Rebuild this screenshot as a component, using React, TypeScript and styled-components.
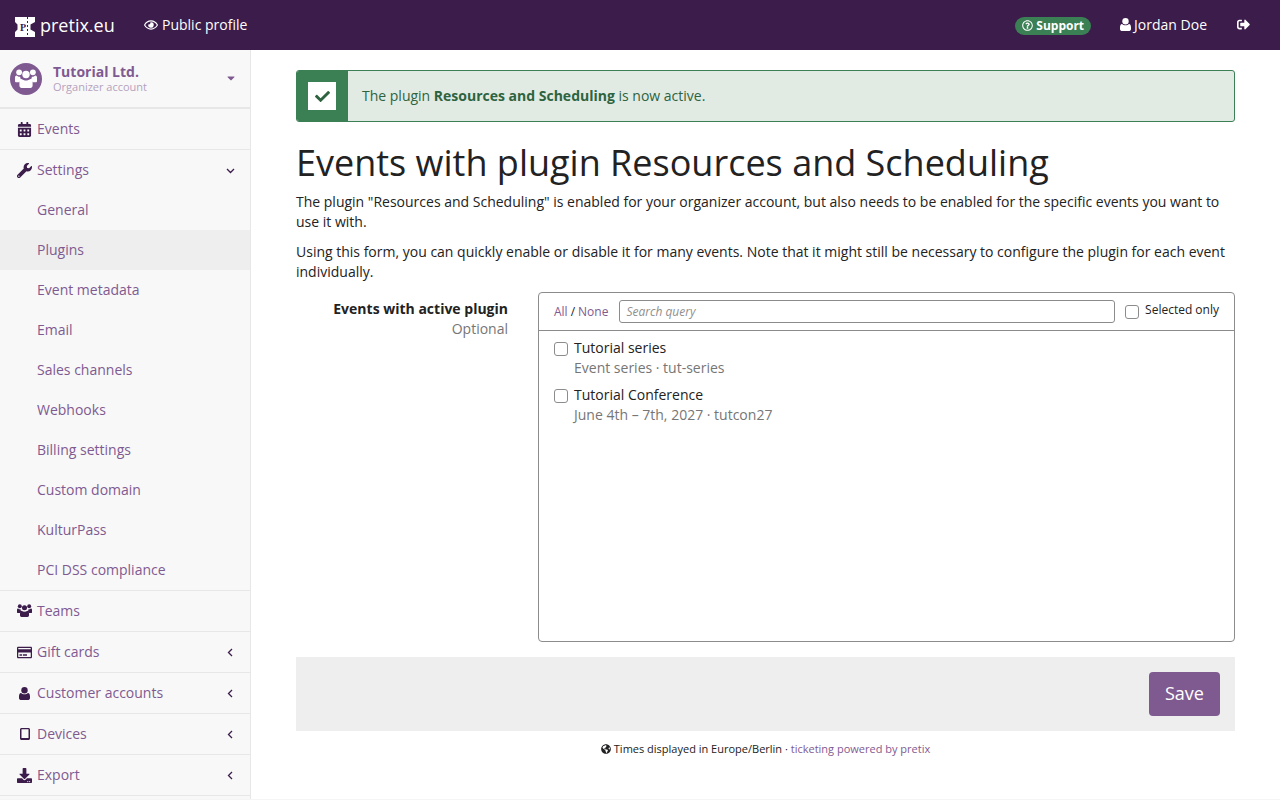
import styled, { createGlobalStyle } from 'styled-components'
import type { ReactNode } from 'react'
import {
  FaCalendarAlt,
  FaCaretDown,
  FaCheck,
  FaDownload,
  FaGlobeAmericas,
  FaRegCreditCard,
  FaRegEye,
  FaRegQuestionCircle,
  FaSignOutAlt,
  FaWrench,
} from 'react-icons/fa'

const purple = '#7f5a91'
const dark = '#3b1c4a'
const green = '#3b7f54'

const GlobalStyle = createGlobalStyle`
  html, body {
    margin: 0;
    height: 100%;
    overflow: hidden;
    background: #fff;
  }
  body {
    font-family: "Open Sans", "Liberation Sans", sans-serif;
    font-size: 14px;
    line-height: 20px;
    color: #222;
  }
  * {
    box-sizing: border-box;
  }
`

const Page = styled.div`
  width: 1280px;
  height: 800px;
  display: flex;
  flex-direction: column;
  overflow: hidden;
  border-bottom: 1px solid #f5f5f5;
`

const TopBar = styled.header`
  flex: 0 0 50px;
  display: flex;
  align-items: center;
  background: ${dark};
  color: #fff;
  padding-left: 15px;
`

const Brand = styled.a`
  display: flex;
  align-items: center;
  gap: 5px;
  font-size: 18px;
  color: #fff;
  width: 129px;
  svg {
    margin-top: 4px;
  }
`

const TopLink = styled.a`
  display: flex;
  align-items: center;
  gap: 4px;
  color: #fff;
  margin-top: -1px;
  svg {
    font-size: 14px;
  }
`

const TopRight = styled.div`
  margin-left: auto;
  display: flex;
  align-items: center;
`

const SupportPill = styled.span`
  display: flex;
  align-items: center;
  gap: 3px;
  height: 18px;
  padding: 0 7px;
  margin-right: 29px;
  border-radius: 9px;
  background: ${green};
  font-size: 12px;
  font-weight: 700;
  margin-top: 1px;
  svg {
    font-size: 11px;
  }
`

const UserLink = styled(TopLink)`
  gap: 3px;
  margin-right: 30px;
`

const LogoutLink = styled(TopLink)`
  margin-right: 30px;
  svg {
    font-size: 13px;
  }
`

const Body = styled.div`
  flex: 1;
  display: flex;
  min-height: 0;
`

const Sidebar = styled.nav`
  flex: 0 0 251px;
  background: #f8f8f8;
  border-right: 1px solid #e7e7e7;
`

const OrgHeader = styled.div`
  height: 59px;
  display: flex;
  align-items: center;
  padding: 0 15px 0 10px;
  border-bottom: 2px solid #e7e7e7;
`

const OrgAvatar = styled.span`
  width: 32px;
  height: 32px;
  border-radius: 50%;
  background: ${purple};
  color: #fff;
  display: flex;
  align-items: center;
  justify-content: center;
  margin-right: 11px;
`

const OrgText = styled.div`
  flex: 1;
  display: flex;
  flex-direction: column;
`

const OrgName = styled.strong`
  color: ${purple};
  font-size: 14px;
  line-height: 16px;
`

const OrgSub = styled.span`
  color: #b5a2be;
  font-size: 11px;
  line-height: 13px;
`

const OrgCaret = styled.span`
  color: ${purple};
  font-size: 12px;
  display: flex;
  margin: -2px -2px 0 0;
`

const NavRow = styled.a<{ $sub?: boolean; $active?: boolean; $expanded?: boolean }>`
  display: flex;
  align-items: center;
  height: ${({ $sub, $expanded }) => ($sub || $expanded ? '40px' : '41px')};
  padding: 0 15px 0 ${({ $sub }) => ($sub ? '37px' : '17px')};
  color: ${purple};
  background: ${({ $active }) => ($active ? '#eee' : 'transparent')};
  border-bottom: ${({ $sub, $expanded }) => ($sub || $expanded ? '0' : '1px solid #e7e7e7')};
`

const NavGroupEnd = styled.div`
  border-bottom: 1px solid #e7e7e7;
`

const NavIcon = styled.span`
  width: 15px;
  margin-right: 5px;
  display: flex;
  justify-content: center;
  color: ${dark};
  font-size: 15px;
`

const NavLabel = styled.span`
  flex: 1;
`

const NavArrow = styled.span`
  color: ${dark};
  display: flex;
`

const Main = styled.main`
  flex: 1;
  padding: 20px 45px 0;
`

const Alert = styled.div`
  height: 52px;
  display: flex;
  align-items: center;
  border: 1px solid ${green};
  border-radius: 3px;
  background: #e1ebe4;
  color: #2e6340;
  overflow: hidden;
`

const AlertIconBlock = styled.div`
  flex: 0 0 52px;
  align-self: stretch;
  background: ${green};
  display: flex;
  align-items: center;
  justify-content: center;
  margin-left: -1px;
  margin-right: 14px;
`

const AlertIconBox = styled.span`
  width: 28px;
  height: 28px;
  background: #fff;
  display: flex;
  align-items: center;
  justify-content: center;
  font-size: 15px;
  color: #2e6340;
`

const Title = styled.h1`
  margin: 21px 0 9px;
  font-size: 36px;
  line-height: 40px;
  font-weight: 400;
  color: #222;
`

const Para = styled.p`
  margin: 0 0 10px;
`

const FormRow = styled.div`
  display: flex;
  margin-top: 10px;
`

const FieldLabel = styled.div`
  flex: 0 0 212px;
  text-align: right;
  padding-top: 7px;
  margin-right: 30px;
`

const FieldName = styled.div`
  font-weight: 700;
`

const FieldHint = styled.div`
  color: #767676;
`

const ListBox = styled.div`
  flex: 1;
  height: 350px;
  border: 1px solid #8c8c8c;
  border-radius: 4px;
`

const ListHead = styled.div`
  height: 38px;
  display: flex;
  align-items: center;
  padding: 0 15px;
  border-bottom: 1px solid #8c8c8c;
  font-size: 12px;
`

const Link = styled.a`
  color: ${purple};
`

const Slash = styled.span`
  margin: 0 3px;
`

const SearchBox = styled.input`
  flex: 1;
  height: 23px;
  margin: 0 10px 0 11px;
  padding: 0 6px;
  border: 1px solid #8c8c8c;
  border-radius: 3px;
  font-family: inherit;
  font-size: 12px;
  font-style: italic;
  outline: none;
  &::placeholder {
    color: #8f8f8f;
    opacity: 1;
  }
`

const Check = styled.input.attrs({ type: 'checkbox' })`
  appearance: none;
  flex: 0 0 14px;
  width: 14px;
  height: 14px;
  margin: 0 6px 0 0;
  border: 1px solid #8c8c8c;
  border-radius: 3px;
  background: #fff;
`

const SelectedOnly = styled.label`
  display: flex;
  align-items: center;
  color: #222;
  span {
    margin-top: -3px;
  }
`

const ListBody = styled.div`
  padding: 7px 15px;
`

const EventItem = styled.label`
  display: flex;
  padding-bottom: 7px;
`

const EventCheck = styled(Check)`
  margin: 4px 6px 0 0;
`

const EventSub = styled.div`
  color: #767676;
`

const Actions = styled.div`
  height: 74px;
  margin-top: 15px;
  padding: 15px;
  display: flex;
  justify-content: flex-end;
  background: #eee;
`

const SaveButton = styled.button`
  width: 71px;
  height: 44px;
  border: 0;
  border-radius: 4px;
  padding: 0 0 2px;
  background: ${purple};
  color: #fff;
  font-family: inherit;
  font-size: 18px;
`

const Footer = styled.footer`
  display: flex;
  justify-content: center;
  align-items: center;
  gap: 3px;
  margin-top: 8px;
  font-size: 11px;
  svg {
    font-size: 10px;
  }
`

const Logo = () => (
  <svg width="20" height="20" viewBox="0 0 20 20">
    <path fill="#fff" d="M0 0h20v5l-4.500 2.500v5L20 15v5H0v-5l2.500-2.500v-5L0 5z" />
    <path stroke={dark} strokeWidth="1" strokeDasharray="2 2" d="M12.500 0v20" />
    <text x="8" y="14" fill={dark} fontFamily="Liberation Serif" fontWeight="700" fontSize="10" textAnchor="middle">
      P
    </text>
  </svg>
)

const UsersGlyph = ({ size }: { size: number }) => (
  <svg width={size} height={(size * 14) / 16} viewBox="0 0 16 14" fill="currentColor">
    <circle cx="3" cy="2.400" r="2.100" />
    <circle cx="13" cy="2.400" r="2.100" />
    <circle cx="8" cy="4" r="2.700" />
    <path d="M0 6.200c0-1 .6-1.500 1.300-1.500.6.700 1.500 1.100 2.400 1 .1 1 .4 1.800 1 2.500-.7.300-1.200.8-1.500 1.500H1C.4 9.700 0 9.300 0 8.700zM16 6.200c0-1-.6-1.500-1.300-1.500-.6.700-1.500 1.100-2.400 1-.1 1-.4 1.800-1 2.500.7.300 1.200.8 1.500 1.500H15c.6 0 1-.4 1-1z" />
    <path d="M5 7.200c.7.700 1.800 1.100 3 1.100s2.300-.4 3-1.100c1 .2 1.800 1 1.800 2.800v2c0 1-.7 1.800-1.600 1.800H4.800c-.9 0-1.600-.8-1.600-1.800v-2c0-1.800.8-2.600 1.800-2.800z" />
  </svg>
)

const UserGlyph = () => (
  <svg width="11" height="13" viewBox="0 0 11 13" fill="currentColor">
    <circle cx="5.500" cy="3.300" r="3.200" />
    <path d="M2 6c.9.900 2.100 1.300 3.500 1.300S8.100 6.900 9 6c1.300.2 2 1.400 2 3.600v1.500c0 1-.7 1.800-1.600 1.800H1.600C.7 12.900 0 12.100 0 11.100V9.600C0 7.400.7 6.200 2 6z" />
  </svg>
)

const TabletGlyph = () => (
  <svg width="10" height="12" viewBox="0 0 10 12">
    <path
      fill="currentColor"
      fillRule="evenodd"
      d="M1.500 0h7C9.300 0 10 .7 10 1.500v9c0 .8-.7 1.500-1.500 1.500h-7C.7 12 0 11.300 0 10.500v-9C0 .7.700 0 1.500 0zM1.500 1.200v8.800h7V1.200z"
    />
  </svg>
)

const Chevron = ({ dir }: { dir: 'left' | 'down' }) => (
  <svg width="9" height="9" viewBox="0 0 9 9" fill="none" stroke="currentColor" strokeWidth="1.300">
    <path d={dir === 'left' ? 'M6 1 2.500 4.500 6 8' : 'M1 3l3.500 3.500L8 3'} />
  </svg>
)

interface NavItemProps {
  icon: ReactNode
  label: string
  arrow?: ReactNode
  expanded?: boolean
}

const NavItem = ({ icon, label, arrow, expanded }: NavItemProps) => (
  <NavRow $expanded={expanded}>
    <NavIcon>{icon}</NavIcon>
    <NavLabel>{label}</NavLabel>
    {arrow && <NavArrow>{arrow}</NavArrow>}
  </NavRow>
)

const settingsLinks = [
  'General',
  'Plugins',
  'Event metadata',
  'Email',
  'Sales channels',
  'Webhooks',
  'Billing settings',
  'Custom domain',
  'KulturPass',
  'PCI DSS compliance',
]

export default function App() {
  return (
    <Page>
      <GlobalStyle />
      <TopBar>
        <Brand>
          <Logo />
          pretix.eu
        </Brand>
        <TopLink>
          <FaRegEye />
          Public profile
        </TopLink>
        <TopRight>
          <SupportPill>
            <FaRegQuestionCircle />
            Support
          </SupportPill>
          <UserLink>
            <UserGlyph />
            Jordan Doe
          </UserLink>
          <LogoutLink>
            <FaSignOutAlt />
          </LogoutLink>
        </TopRight>
      </TopBar>
      <Body>
        <Sidebar>
          <OrgHeader>
            <OrgAvatar>
              <UsersGlyph size={22} />
            </OrgAvatar>
            <OrgText>
              <OrgName>Tutorial Ltd.</OrgName>
              <OrgSub>Organizer account</OrgSub>
            </OrgText>
            <OrgCaret>
              <FaCaretDown />
            </OrgCaret>
          </OrgHeader>
          <NavItem icon={<FaCalendarAlt />} label="Events" />
          <NavItem icon={<FaWrench />} label="Settings" arrow={<Chevron dir="down" />} expanded />
          <NavGroupEnd>
            {settingsLinks.map((label) => (
              <NavRow key={label} $sub $active={label === 'Plugins'}>
                {label}
              </NavRow>
            ))}
          </NavGroupEnd>
          <NavItem icon={<UsersGlyph size={15} />} label="Teams" />
          <NavItem icon={<FaRegCreditCard />} label="Gift cards" arrow={<Chevron dir="left" />} />
          <NavItem icon={<UserGlyph />} label="Customer accounts" arrow={<Chevron dir="left" />} />
          <NavItem icon={<TabletGlyph />} label="Devices" arrow={<Chevron dir="left" />} />
          <NavItem icon={<FaDownload />} label="Export" arrow={<Chevron dir="left" />} />
        </Sidebar>
        <Main>
          <Alert>
            <AlertIconBlock>
              <AlertIconBox>
                <FaCheck />
              </AlertIconBox>
            </AlertIconBlock>
            <span>
              The plugin <strong>Resources and Scheduling</strong> is now active.
            </span>
          </Alert>
          <Title>Events with plugin Resources and Scheduling</Title>
          <Para>
            The plugin "Resources and Scheduling" is enabled for your organizer account, but also
            needs to be enabled for the specific events you want to use it with.
          </Para>
          <Para>
            Using this form, you can quickly enable or disable it for many events. Note that it
            might still be necessary to configure the plugin for each event individually.
          </Para>
          <FormRow>
            <FieldLabel>
              <FieldName>Events with active plugin</FieldName>
              <FieldHint>Optional</FieldHint>
            </FieldLabel>
            <ListBox>
              <ListHead>
                <Link>All</Link>
                <Slash>/</Slash>
                <Link>None</Link>
                <SearchBox placeholder="Search query" />
                <SelectedOnly>
                  <Check />
                  <span>Selected only</span>
                </SelectedOnly>
              </ListHead>
              <ListBody>
                <EventItem>
                  <EventCheck />
                  <div>
                    Tutorial series
                    <EventSub>Event series · tut-series</EventSub>
                  </div>
                </EventItem>
                <EventItem>
                  <EventCheck />
                  <div>
                    Tutorial Conference
                    <EventSub>June 4th – 7th, 2027 · tutcon27</EventSub>
                  </div>
                </EventItem>
              </ListBody>
            </ListBox>
          </FormRow>
          <Actions>
            <SaveButton>Save</SaveButton>
          </Actions>
          <Footer>
            <FaGlobeAmericas />
            <span>
              Times displayed in Europe/Berlin · <Link>ticketing powered by pretix</Link>
            </span>
          </Footer>
        </Main>
      </Body>
    </Page>
  )
}
